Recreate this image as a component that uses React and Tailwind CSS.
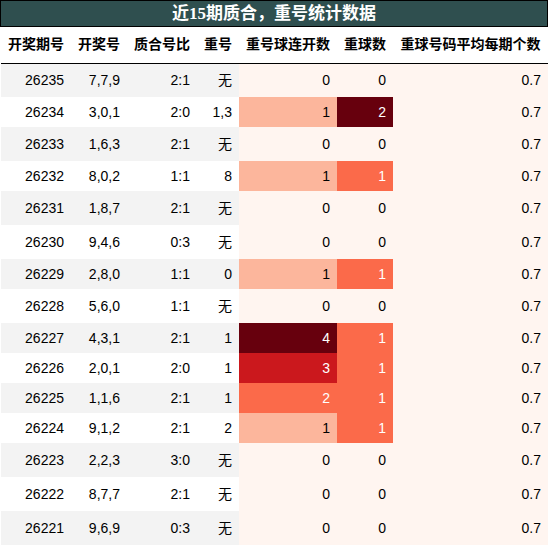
import React from "react";

const rows = [
  ["26235", "7,7,9", "2:1", "无", 0, 0],
  ["26234", "3,0,1", "2:0", "1,3", 1, 2],
  ["26233", "1,6,3", "2:1", "无", 0, 0],
  ["26232", "8,0,2", "1:1", "8", 1, 1],
  ["26231", "1,8,7", "2:1", "无", 0, 0],
  ["26230", "9,4,6", "0:3", "无", 0, 0],
  ["26229", "2,8,0", "1:1", "0", 1, 1],
  ["26228", "5,6,0", "1:1", "无", 0, 0],
  ["26227", "4,3,1", "2:1", "1", 4, 1],
  ["26226", "2,0,1", "2:0", "1", 3, 1],
  ["26225", "1,1,6", "2:1", "1", 2, 1],
  ["26224", "9,1,2", "2:1", "2", 1, 1],
  ["26223", "2,2,3", "3:0", "无", 0, 0],
  ["26222", "8,7,7", "2:1", "无", 0, 0],
  ["26221", "9,6,9", "0:3", "无", 0, 0],
];

const col5 = {
  0: "bg-[#fff5f0] text-black",
  1: "bg-[#fcb69c] text-black",
  2: "bg-[#fb6a4a] text-white",
  3: "bg-[#cb181d] text-white",
  4: "bg-[#67000d] text-white",
};
const col6 = {
  0: "bg-[#fff5f0] text-black",
  1: "bg-[#fb6a4a] text-white",
  2: "bg-[#67000d] text-white",
};

const headers = ["开奖期号", "开奖号", "质合号比", "重号", "重号球连开数", "重球数", "重球号码平均每期个数"];
const widths = ["w-[70px]", "w-[56px]", "w-[70px]", "w-[42px]", "w-[98px]", "w-[56px]", "w-[155px]"];

export default function App() {
  return (
    <div className="w-[548px] h-[546px] bg-white overflow-hidden text-black" style={{ fontFamily: '"Liberation Sans", "Noto Sans CJK SC", sans-serif' }}>
      <div
        className="h-[27px] border border-black bg-[#2f4f4f] text-white font-bold text-[17px] flex items-center justify-center leading-none"
        style={{ fontFamily: '"Liberation Serif", "Noto Sans CJK SC", serif' }}
      >
        近15期质合，重号统计数据
      </div>
      <div className="pl-[1px]">
        <table className="table-fixed border-collapse w-[547px] text-[14px]">
          <colgroup>
            {widths.map((w, i) => (
              <col key={i} className={w} />
            ))}
          </colgroup>
          <thead>
            <tr className="h-[36px] border-b border-black">
              {headers.map((h, i) => (
                <th key={i} className="px-[7px] p-0 font-bold text-center whitespace-nowrap">
                  {h}
                </th>
              ))}
            </tr>
          </thead>
          <tbody>
            {rows.map((r, i) => {
              const bg = i % 2 === 0 ? "bg-[#f3f3f3]" : "bg-white";
              const h = r[3] === "无" ? "h-[34px]" : "h-[30px]";
              return (
                <tr key={i} className={h}>
                  <td className={`${bg} p-0 pr-[7px] text-right`}>{r[0]}</td>
                  <td className={`${bg} p-0 pr-[7px] text-right`}>{r[1]}</td>
                  <td className={`${bg} p-0 pr-[7px] text-right`}>{r[2]}</td>
                  <td className={`${bg} p-0 pr-[7px] text-right`}>{r[3]}</td>
                  <td className={`${col5[r[4]]} p-0 pr-[7px] text-right`}>{r[4]}</td>
                  <td className={`${col6[r[5]]} p-0 pr-[7px] text-right`}>{r[5]}</td>
                  <td className="bg-[#fff5f0] p-0 pr-[7px] text-right">0.7</td>
                </tr>
              );
            })}
          </tbody>
        </table>
      </div>
    </div>
  );
}
